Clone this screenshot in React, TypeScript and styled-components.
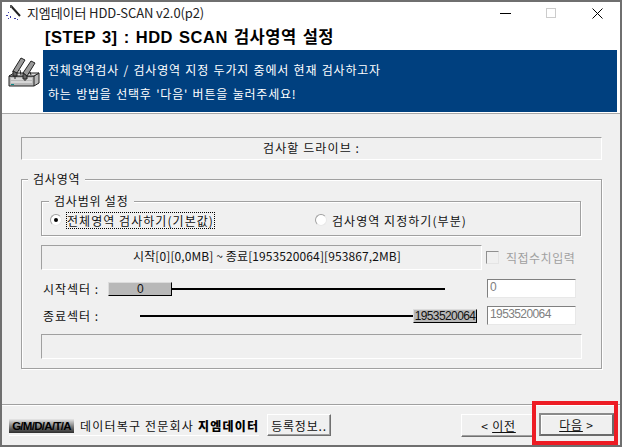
import React from 'react'
import styled, { createGlobalStyle } from 'styled-components'

const GlobalStyle = createGlobalStyle`
  html, body {
    margin: 0;
    padding: 0;
    background: #f0f0f0;
  }
  body {
    font-family: "Noto Sans CJK KR", "Liberation Sans", sans-serif;
    font-size: 12px;
    color: #111;
  }
  * {
    box-sizing: border-box;
  }
`

const Window = styled.div`
  position: relative;
  width: 622px;
  height: 447px;
  border: 2px solid #6f6f6f;
  background: #f0f0f0;
  display: flex;
  flex-direction: column;
`

const TitleBar = styled.div`
  height: 22px;
  background: #fff;
  display: flex;
  align-items: center;
  padding-left: 3px;
  flex-shrink: 0;
`

const TitleText = styled.div`
  margin-left: 4px;
  font-family: "Noto Sans CJK KR", sans-serif;
  font-size: 13px;
  line-height: 22px;
  color: #222;
  letter-spacing: -0.1px;
`

const WindowControls = styled.div`
  margin-left: auto;
  display: flex;
  align-items: center;
  height: 22px;
`

const ControlSlot = styled.div`
  width: 46px;
  height: 22px;
  display: flex;
  align-items: center;
  justify-content: center;
`

const Header = styled.div`
  height: 90px;
  background: #fff;
  border-bottom: 1px solid #a8a8a8;
  display: flex;
  flex-shrink: 0;
  padding-right: 3px;
`

const ChipColumn = styled.div`
  width: 41px;
  padding: 32px 0 0 6px;
  flex-shrink: 0;
`

const HeaderMain = styled.div`
  flex: 1;
  display: flex;
  flex-direction: column;
`

const StepTitle = styled.div`
  height: 26px;
  padding-left: 2px;
  font-size: 16.5px;
  font-weight: 700;
  line-height: 27px;
  color: #000;
  letter-spacing: 0.5px;
  word-spacing: 1px;
  white-space: nowrap;
  font-family: "Liberation Sans", "Noto Sans CJK KR", sans-serif;
`

const Banner = styled.div`
  height: 62px;
  background: #00407f;
  color: #fff;
  padding: 8px 0 0 5px;
  font-size: 12px;
  line-height: 24px;
  letter-spacing: 0.8px;
  word-spacing: 1px;
`

const Body = styled.div`
  flex: 1;
  padding: 23px 19px 0 19px;
  background: #f0f0f0;
  display: flex;
  flex-direction: column;
`

const DrivePanel = styled.div`
  height: 23px;
  width: 581px;
  border: 1px solid;
  border-color: #a0a0a0 #fff #fff #a0a0a0;
  text-align: center;
  font-size: 12px;
  line-height: 20px;
  letter-spacing: 1.1px;
`

const OuterGroup = styled.fieldset`
  margin: 11px 0 0;
  padding: 0 19px 0 19px;
  width: 580px;
  height: 198px;
  border: 1px solid #a0a0a0;
  box-shadow: 1px 1px 0 #fff, inset 1px 1px 0 #fff;
`

const GroupLegend = styled.legend<{ $inset: number }>`
  margin-left: ${(p) => p.$inset}px;
  padding: 0 5px;
  background: #f0f0f0;
  font-size: 12px;
  line-height: 16px;
  letter-spacing: 0.8px;
`

const InnerGroup = styled.fieldset`
  margin: 6px 0 0;
  padding: 0;
  width: 540px;
  height: 43px;
  border: 1px solid #a0a0a0;
  box-shadow: 1px 1px 0 #fff, inset 1px 1px 0 #fff;
`

const RadioRow = styled.div`
  display: flex;
  align-items: center;
  height: 18px;
  margin-top: 2px;
`

const RadioOption = styled.label<{ $width: number }>`
  width: ${(p) => p.$width}px;
  display: flex;
  align-items: center;
  padding-left: 8px;
  letter-spacing: 1.05px;
  white-space: nowrap;
`

const RadioDot = styled.span<{ $checked?: boolean }>`
  width: 12px;
  height: 12px;
  border-radius: 50%;
  background: #fff;
  border: 1px solid #a0a0a0;
  border-right-color: #e8e8e8;
  border-bottom-color: #e8e8e8;
  display: inline-flex;
  align-items: center;
  justify-content: center;
  margin-right: 5px;
  flex-shrink: 0;
  &::after {
    content: '';
    width: 4px;
    height: 4px;
    border-radius: 50%;
    background: ${(p) => (p.$checked ? '#000' : 'transparent')};
  }
`

const FocusText = styled.span`
  outline: 1px dotted #000;
  line-height: 15px;
`

const RangeRow = styled.div`
  margin-top: 9px;
  display: flex;
  align-items: center;
`

const RangePanel = styled.div`
  width: 441px;
  height: 25px;
  padding-left: 11px;
  border: 1px solid;
  border-color: #a0a0a0 #fff #fff #a0a0a0;
  text-align: center;
  line-height: 20px;
  letter-spacing: 0.1px;
`

const DirectCheck = styled.label`
  margin-left: 4px;
  display: flex;
  align-items: center;
  color: #a0a0a0;
  letter-spacing: 0.5px;
`

const CheckBox = styled.span`
  width: 13px;
  height: 13px;
  border: 1px solid #909090;
  border-right-color: #e4e4e4;
  border-bottom-color: #e4e4e4;
  margin-right: 7px;
  background: #f0f0f0;
`

const SectorRow = styled.div<{ $top: number }>`
  margin-top: ${(p) => p.$top}px;
  display: flex;
  align-items: center;
  height: 19px;
`

const SectorLabel = styled.div`
  width: 67px;
  padding-left: 2px;
  letter-spacing: 1px;
  white-space: nowrap;
`

const Slider = styled.div<{ $side: 'start' | 'end' }>`
  width: 369px;
  display: flex;
  align-items: center;
  padding: ${(p) => (p.$side === 'start' ? '0 32px 0 0' : '0 0 0 32px')};
`

const Track = styled.div`
  flex: 1;
  height: 2px;
  background: #000;
`

const Thumb = styled.div`
  width: 64px;
  height: 14px;
  background: #b8b8b8;
  border-top: 1px solid #dcdcdc;
  border-left: 1px solid #dcdcdc;
  border-right: 1px solid #000;
  border-bottom: 1px solid #000;
  text-align: center;
  font-size: 12px;
  line-height: 12px;
  letter-spacing: -0.6px;
  color: #111;
  font-family: "Liberation Sans", sans-serif;
  flex-shrink: 0;
`

const SectorInput = styled.div`
  margin-left: 10px;
  width: 89px;
  height: 19px;
  background: #fff;
  border: 1px solid;
  border-color: #808080 #e8e8e8 #e8e8e8 #808080;
  color: #808080;
  padding-left: 2px;
  font-size: 12px;
  letter-spacing: -0.6px;
  line-height: 15px;
  font-family: "Liberation Sans", sans-serif;
`

const MessagePanel = styled.div`
  margin-top: 9px;
  width: 541px;
  height: 25px;
  border: 1px solid;
  border-color: #a0a0a0 #fff #fff #a0a0a0;
`

const Footer = styled.div`
  height: 41px;
  border-top: 1px solid #a0a0a0;
  box-shadow: inset 0 1px 0 #fff;
  display: flex;
  flex-shrink: 0;
  padding-left: 7px;
`

const Brand = styled.div`
  margin-top: 14px;
  height: 17px;
  width: 250px;
  display: flex;
  align-items: flex-start;
  border-bottom: 1px solid #fff;
`

const Logo = styled.div`
  width: 65px;
  height: 14px;
  background: linear-gradient(#e8e8e8, #7a7a7a 55%, #2e2e2e);
  font-family: "Liberation Sans", sans-serif;
  font-size: 11.5px;
  font-weight: 700;
  line-height: 14px;
  letter-spacing: -0.7px;
  color: #000;
  text-align: center;
  white-space: nowrap;
  overflow: hidden;
  flex-shrink: 0;
`

const BrandText = styled.div`
  margin-left: 6px;
  line-height: 14px;
  white-space: nowrap;
  letter-spacing: 1.2px;
  strong {
    font-weight: 900;
    color: #000;
  }
`

const Button = styled.button<{ $w: number; $top: number; $default?: boolean }>`
  width: ${(p) => p.$w}px;
  height: 23px;
  margin-top: ${(p) => p.$top}px;
  padding: 0;
  background: #f0f0f0;
  font-family: inherit;
  font-size: 12px;
  color: #111;
  letter-spacing: 0.8px;
  line-height: 17px;
  border: ${(p) => (p.$default ? '2px' : '1px')} solid;
  border-color: ${(p) =>
    p.$default ? '#8a8a8a #6a6a6a #6a6a6a #8a8a8a' : '#fff #707070 #707070 #fff'};
  box-shadow: ${(p) => (p.$default ? 'inset 1px 1px 0 #fff' : 'inset -1px -1px 0 #a0a0a0')};
`

const RegisterButton = styled(Button)`
  margin-left: 8px;
  height: 22px;
`

const NavButtons = styled.div`
  margin-left: auto;
  display: flex;
  gap: 3px;
  padding-right: 6px;
`

const Underlined = styled.span`
  text-decoration: underline;
`

const RedMark = styled.div`
  position: absolute;
  left: 530px;
  top: 399px;
  width: 86px;
  height: 44px;
  border: 4px solid #ed1c24;
  pointer-events: none;
`

const WandIcon = () => (
  <svg width="18" height="18" viewBox="0 0 18 18">
    <path d="M6 2l9 10" stroke="#222" strokeWidth="2" />
    <path d="M5 1h2v3H5z" fill="#555" />
    <g fill="#3a3aa8">
      <rect x="3" y="8" width="1" height="1" />
      <rect x="1" y="11" width="2" height="1" />
      <rect x="5" y="12" width="1" height="2" />
      <rect x="9" y="14" width="2" height="1" />
      <rect x="3" y="14" width="1" height="1" />
      <rect x="12" y="15" width="1" height="1" />
    </g>
  </svg>
)

const ChipIcon = () => (
  <svg width="32" height="32" viewBox="0 0 32 32">
    <path d="M1 20h25l5-3v10l-5 3H1z" fill="#b8b8b8" stroke="#222" />
    <path d="M1 20l5-3h25l-5 3z" fill="#dcdcdc" stroke="#222" />
    <path d="M26 20v10" stroke="#222" />
    <path d="M3 23h21M3 26h21" stroke="#f4f4f4" />
    <rect x="3" y="28" width="3" height="1" fill="#0a8a8a" />
    <path d="M5 15L13 2l4 2-8 13-4-1z" fill="#9a9a9a" stroke="#222" />
    <path d="M5 15l4 2v3H5z" fill="#666" stroke="#222" />
    <path d="M15 17l8-12 4 2-8 13z" fill="#9a9a9a" stroke="#222" />
    <path d="M15 17l4 3v3h-4z" fill="#666" stroke="#222" />
    <path d="M7 20v3M12 14l1 5M17 23v2M22 16l1 3" stroke="#222" />
  </svg>
)

const App = () => {
  return (
    <>
      <GlobalStyle />
      <Window>
        <TitleBar>
          <WandIcon />
          <TitleText>지엠데이터 HDD-SCAN v2.0(p2)</TitleText>
          <WindowControls>
            <ControlSlot>
              <svg width="11" height="11" viewBox="0 0 11 11">
                <path d="M0 5.5h11" stroke="#000" />
              </svg>
            </ControlSlot>
            <ControlSlot>
              <svg width="10" height="10" viewBox="0 0 10 10">
                <rect x="0.5" y="0.5" width="9" height="9" fill="none" stroke="#ccc" />
              </svg>
            </ControlSlot>
            <ControlSlot>
              <svg width="11" height="11" viewBox="0 0 11 11">
                <path d="M0.5 0.5l10 10M10.5 0.5l-10 10" stroke="#000" />
              </svg>
            </ControlSlot>
          </WindowControls>
        </TitleBar>
        <Header>
          <ChipColumn>
            <ChipIcon />
          </ChipColumn>
          <HeaderMain>
            <StepTitle>[STEP 3] : HDD SCAN 검사영역 설정</StepTitle>
            <Banner>
              전체영역검사 / 검사영역 지정 두가지 중에서 현재 검사하고자
              <br />
              하는 방법을 선택후 '다음' 버튼을 눌러주세요!
            </Banner>
          </HeaderMain>
        </Header>
        <Body>
          <DrivePanel>검사할 드라이브 :</DrivePanel>
          <OuterGroup>
            <GroupLegend $inset={-13}>검사영역</GroupLegend>
            <InnerGroup>
              <GroupLegend $inset={7}>검사범위 설정</GroupLegend>
              <RadioRow>
                <RadioOption $width={265}>
                  <RadioDot $checked />
                  <FocusText>전체영역 검사하기(기본값)</FocusText>
                </RadioOption>
                <RadioOption $width={260}>
                  <RadioDot />
                  검사영역 지정하기(부분)
                </RadioOption>
              </RadioRow>
            </InnerGroup>
            <RangeRow>
              <RangePanel>시작[0][0,0MB] ~ 종료[1953520064][953867,2MB]</RangePanel>
              <DirectCheck>
                <CheckBox />
                직접수치입력
              </DirectCheck>
            </RangeRow>
            <SectorRow $top={9}>
              <SectorLabel>시작섹터 :</SectorLabel>
              <Slider $side="start">
                <Thumb>0</Thumb>
                <Track />
              </Slider>
              <SectorInput>0</SectorInput>
            </SectorRow>
            <SectorRow $top={8}>
              <SectorLabel>종료섹터 :</SectorLabel>
              <Slider $side="end">
                <Track />
                <Thumb>1953520064</Thumb>
              </Slider>
              <SectorInput>1953520064</SectorInput>
            </SectorRow>
            <MessagePanel />
          </OuterGroup>
        </Body>
        <Footer>
          <Brand>
            <Logo>G/M/D/A/T/A</Logo>
            <BrandText>
              데이터복구 전문회사 <strong>지엠데이터</strong>
            </BrandText>
          </Brand>
          <RegisterButton $w={64} $top={9}>
            등록정보..
          </RegisterButton>
          <NavButtons>
            <Button $w={75} $top={9}>
              &lt; <Underlined>이전</Underlined>
            </Button>
            <Button $w={75} $top={8} $default>
              <Underlined>다음</Underlined> &gt;
            </Button>
          </NavButtons>
        </Footer>
        <RedMark />
      </Window>
    </>
  )
}

export default App
